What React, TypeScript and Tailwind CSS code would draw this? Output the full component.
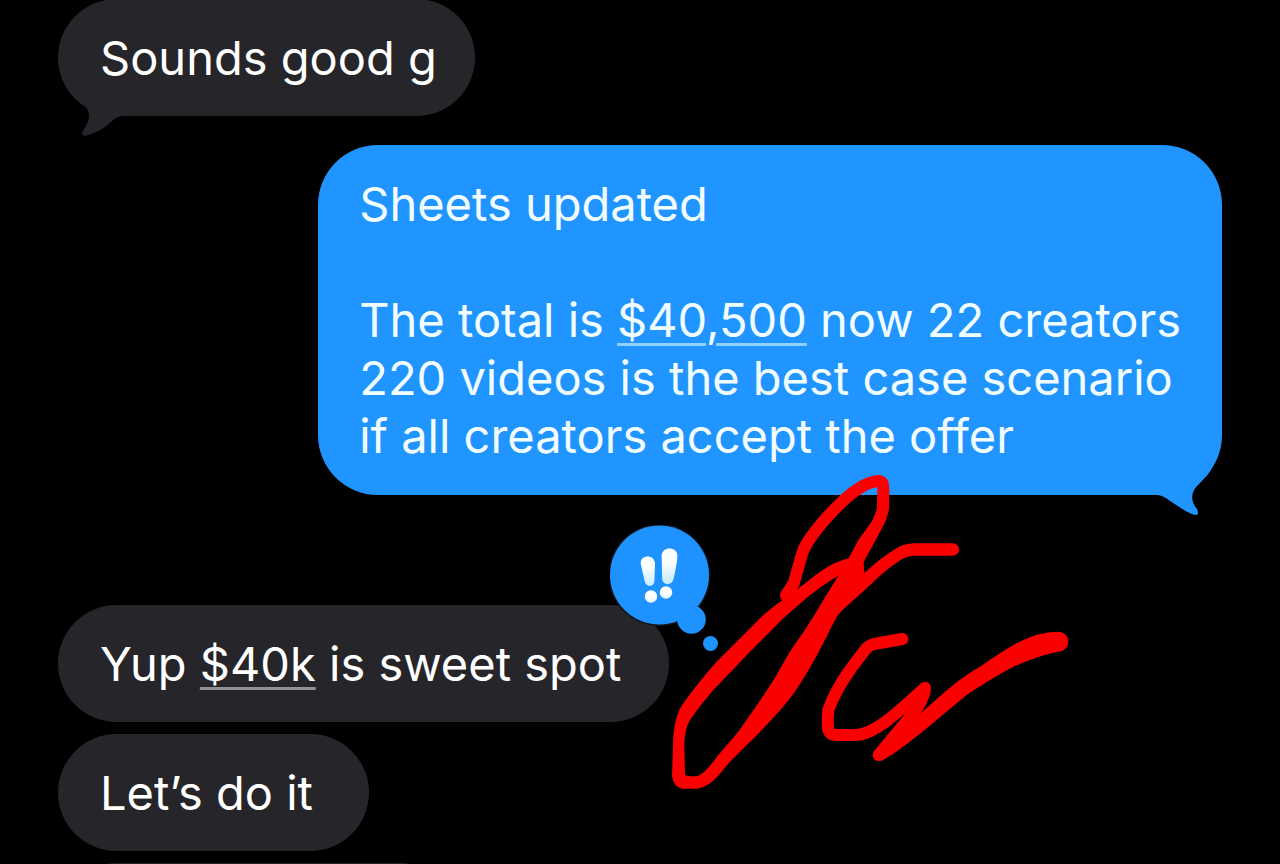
import type { ReactNode } from "react";

function Amount({ children, tone }: { children: ReactNode; tone: "gray" | "blue" }) {
  const color = tone === "gray" ? "decoration-[#929195]" : "decoration-[#8fd0ff]";
  return (
    <a href="#amount" className={`underline decoration-3 underline-offset-6 ${color}`}>
      {children}
    </a>
  );
}

function Received({
  children,
  spacing = "pr-14",
  tail = false,
}: {
  children: ReactNode;
  spacing?: string;
  tail?: boolean;
}) {
  return (
    <div className={`relative rounded-[60px] bg-[#26252a] pt-[30px] pb-[29px] pl-[42px] ${spacing}`}>
      <p className="whitespace-nowrap">{children}</p>
      {tail && (
        <svg className="absolute -bottom-5 left-5 h-10 w-11" viewBox="0 0 44 40" aria-hidden="true">
          <path d="M0 4C6 9 11 13 11 19C11 29 4 34 4 38Q5 41 10 39Q22 36 33 26Q39 20 44 20V0H0Z" fill="#26252a" />
        </svg>
      )}
    </div>
  );
}

function EmphasisReaction() {
  return (
    <svg
      className="absolute -top-20 -right-[51px] h-[130px] w-[110px]"
      viewBox="0 0 110 130"
      role="img"
      aria-label="Emphasized"
    >
      <defs>
        <linearGradient id="mark" x1="0" y1="0" x2="0" y2="1">
          <stop offset="0.35" stopColor="#ffffff" />
          <stop offset="1" stopColor="#c4ebfd" />
        </linearGradient>
        <linearGradient id="dot" x1="0" y1="0" x2="0" y2="1">
          <stop offset="0.4" stopColor="#ffffff" />
          <stop offset="1" stopColor="#e2f6ff" />
        </linearGradient>
      </defs>
      <circle cx="49.500" cy="50" r="51" fill="#101318" />
      <g fill="#1e93ff">
        <circle cx="49.500" cy="50" r="49.500" />
        <circle cx="81.500" cy="94.500" r="14.300" />
        <circle cx="100.500" cy="118.500" r="7.500" />
      </g>
      <g fill="url(#mark)">
        <path d="M30.700 38.500C30.200 29 44.800 29 45 38.500L44.400 56C44 62.500 36 62.500 34.600 56Z" />
        <path d="M51.600 31C52 20.800 67.500 21.300 67.400 31C67.200 38 65 47 63.400 54.500C61.500 61 52.800 60.500 52.200 54Z" />
      </g>
      <g fill="url(#dot)">
        <circle cx="41" cy="71.500" r="6.200" />
        <circle cx="56" cy="67.500" r="6.200" />
      </g>
    </svg>
  );
}

function Scribble() {
  return (
    <svg
      className="pointer-events-none absolute top-[460px] left-[650px] h-[350px] w-[430px]"
      viewBox="0 0 1290 1050"
      aria-hidden="true"
    >
      <g fill="none" stroke="#fb0000" strokeWidth="36" strokeLinecap="round" strokeLinejoin="round">
        <path d="M408 406L431 371L456 282C466 245 518 180 587 115C630 78 660 63 688 63Q701 66 700 88L699 145C693 185 664 222 642 257L620 305" />
        <path d="M757 537L672 552Q655 556 646 569C600 628 560 680 535 750Q532 780 534 805Q538 825 560 825L620 825C680 820 750 751 825 683C824 733 770 780 686 885" />
      </g>
      <g fill="#fb0000">
        <path
          fillRule="evenodd"
          d="M665 185L625 240L596 295Q550 305 500 343L420 405Q380 430 340 465L200 605C155 655 125 695 100 730Q71 770 69 850L66 948Q70 984 100 986H140C185 980 210 940 240 905C300 845 380 770 430 702C480 630 515 560 555 480Q563 464 580 448L650 385Q710 326 740 308Q765 289 790 287H909A18 18 0 0 0 909 250H790Q755 252 735 268Q700 288 643 339L641 305L680 235L700 190ZM565 347C525 410 495 465 480 485C450 535 430 555 408 595C390 630 360 678 335 715L265 815L205 885Q165 940 145 947Q130 952 105 946L103 850Q105 805 120 780Q150 735 190 690L300 575L400 475C450 430 505 380 565 347Z"
        />
        <path d="M778 790L880 700C920 665 955 640 990 620Q1050 578 1090 555Q1160 515 1225 515A30 30 0 0 1 1225 575Q1170 585 1090 620Q1010 663 950 705L830 805C780 845 740 878 698 901Q685 906 673 895L740 800Z" />
      </g>
    </svg>
  );
}

export default function App() {
  return (
    <main className="relative h-screen overflow-hidden bg-black font-['Inter','Liberation_Sans',sans-serif] text-[47px] leading-[58px] text-white">
      <div className="-mt-px flex flex-col items-start px-[58px]">
        <Received tail spacing="pr-[38px]">
          Sounds good g
        </Received>

        <div className="relative mt-[29px] self-end rounded-[60px] bg-[#2094ff] px-[41px] py-[30px] text-[#f2fdff]">
          <p>Sheets updated</p>
          <p className="mt-[58px] whitespace-nowrap">
            The total is <Amount tone="blue">$40,500</Amount> now 22 creators
            <br />
            220 videos is the best case scenario
            <br />
            if all creators accept the offer
          </p>
          <svg className="absolute right-0 -bottom-5 h-15 w-18" viewBox="0 0 72 60" aria-hidden="true">
            <path d="M0 40H8Q14 41 20 46L34 55Q42 60 47 60Q49 58 47 54C38 43 43 34 51 27Q57 21 61 15L40 0H0Z" fill="#2094ff" />
          </svg>
        </div>

        <div className="relative mt-[110px]">
          <Received spacing="pr-12">
            Yup <Amount tone="gray">$40k</Amount> is sweet spot
          </Received>
          <EmphasisReaction />
        </div>

        <div className="mt-3">
          <Received>Let’s do it</Received>
        </div>

        <div className="mt-3 h-[117px] w-[400px] rounded-[60px] bg-[#26252a]" />
      </div>
      <Scribble />
    </main>
  );
}
